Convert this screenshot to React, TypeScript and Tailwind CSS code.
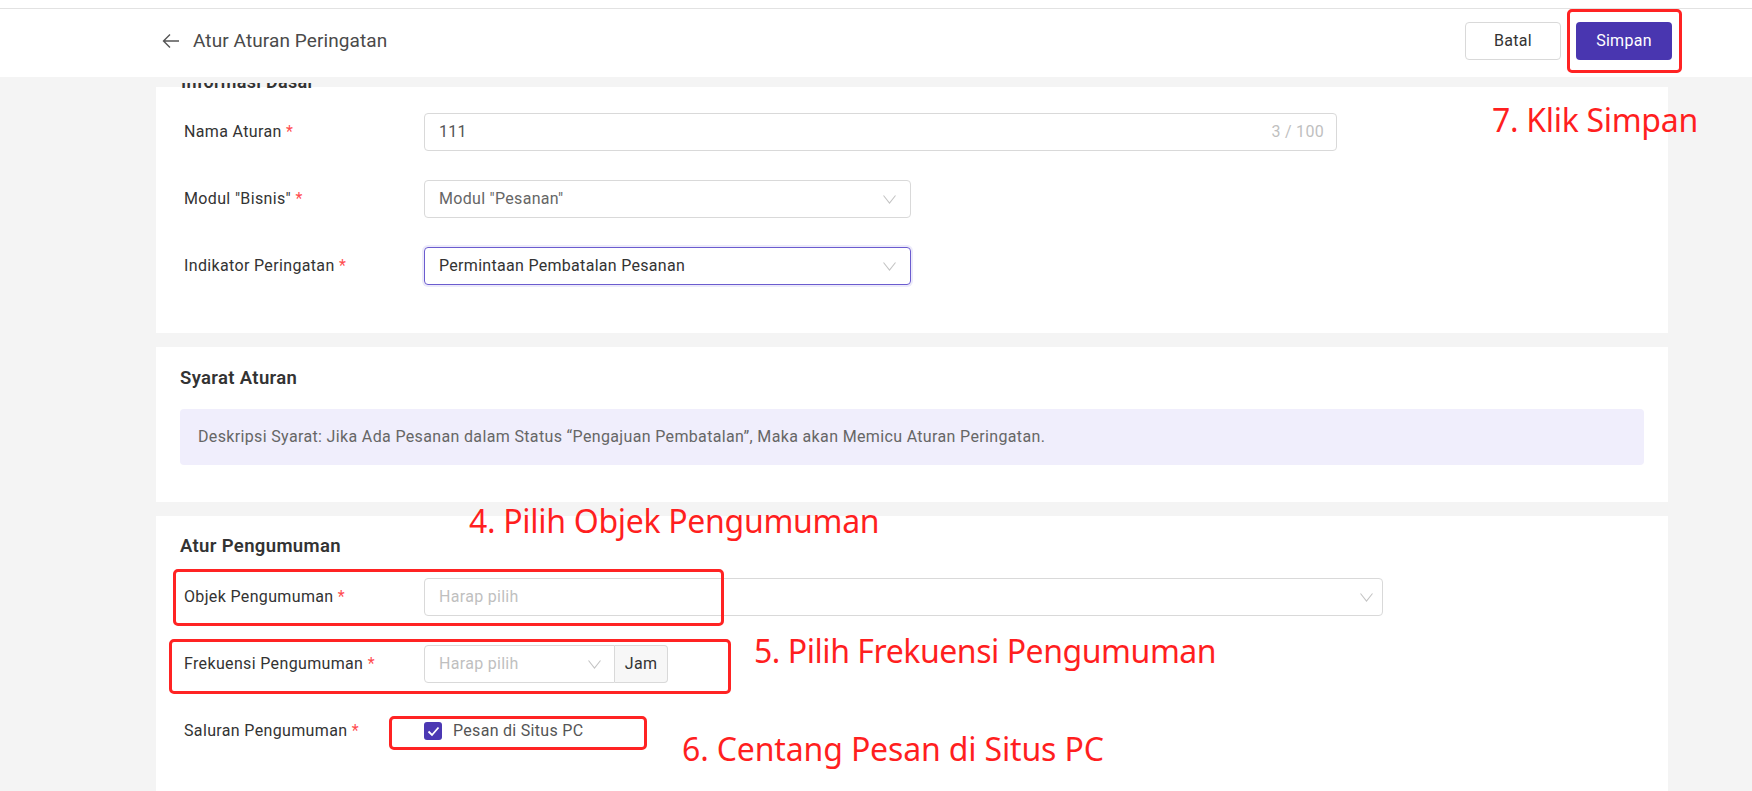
import React from "react";

function Chevron({ className = "" }: { className?: string }) {
  return (
    <svg width="13" height="9" viewBox="0 0 13 9" className={className} fill="none">
      <polyline points="0.5,0.5 6.5,8 12.5,0.5" stroke="#c4c4c4" strokeWidth="1.1" />
    </svg>
  );
}

function Label({ text }: { text: string }) {
  return (
    <div className="w-[240px] shrink-0 text-[16px] tracking-[0.35px] text-[#333]">
      {text} <span className="text-[#ff4d4f]">*</span>
    </div>
  );
}

function Annot({ text, className }: { text: string; className: string }) {
  return (
    <div
      className={
        "absolute whitespace-nowrap font-['Noto_Sans',sans-serif] text-[32px] tracking-[-0.3px] leading-none text-[#ff1f1f] " +
        className
      }
    >
      {text}
    </div>
  );
}

export default function App() {
  return (
    <div className="relative h-[791px] w-[1752px] overflow-hidden flex flex-col font-['Roboto',sans-serif] bg-[#f4f4f4]">
      {/* top strip */}
      <div className="h-[9px] shrink-0 bg-white border-b border-[#e2e2e2]" />
      {/* header */}
      <header className="h-[68px] shrink-0 bg-white flex items-start justify-between pl-[162px] pr-[80px] pt-[13px]">
        <div className="flex items-center h-[38px] gap-[13px]">
          <svg width="18" height="16" viewBox="0 0 18 16" fill="none">
            <path d="M17 8H1.5M8 1.5L1.5 8L8 14.5" stroke="#555" strokeWidth="1.4" />
          </svg>
          <span className="text-[19px] tracking-[0.1px] text-[#4a4a4a]">Atur Aturan Peringatan</span>
        </div>
        <div className="flex gap-[15px]">
          <button className="w-[96px] h-[38px] rounded-[4px] border border-[#d9d9d9] bg-white text-[16px] tracking-[0.3px] text-[#333]">
            Batal
          </button>
          <button className="w-[96px] h-[38px] rounded-[4px] bg-[#4936b0] text-[16px] tracking-[0.3px] text-white">
            Simpan
          </button>
        </div>
      </header>

      {/* main */}
      <main className="flex-1 flex flex-col overflow-hidden pl-[156px] pr-[84px] bg-[#f4f4f4]">
        {/* strip with peeking title */}
        <div className="h-[10px] shrink-0 relative">
          <div className="relative z-10 mt-[6px] h-[8px] overflow-hidden pl-[25px]">
            <div className="-mt-[11px] text-[18px] tracking-[0.3px] leading-[20px] font-semibold text-[#333]">
              Informasi Dasar
            </div>
          </div>
        </div>

        {/* card 1 */}
        <section className="bg-white pt-[26px] pb-[48px] pl-[28px] flex flex-col gap-[29px] shrink-0">
          <div className="flex items-center">
            <Label text="Nama Aturan" />
            <div className="w-[913px] h-[38px] rounded-[4px] border border-[#d9d9d9] flex items-center justify-between pl-[14px] pr-[12px] text-[16px] tracking-[0.3px]">
              <span className="text-[#555]">111</span>
              <span className="text-[#bfbfbf]">3 / 100</span>
            </div>
          </div>
          <div className="flex items-center">
            <Label text={'Modul "Bisnis"'} />
            <div className="w-[487px] h-[38px] rounded-[4px] border border-[#d9d9d9] flex items-center justify-between pl-[14px] pr-[14px] text-[16px] tracking-[0.3px]">
              <span className="text-[#666]">Modul "Pesanan"</span>
              <Chevron />
            </div>
          </div>
          <div className="flex items-center">
            <Label text="Indikator Peringatan" />
            <div className="w-[487px] h-[38px] rounded-[4px] border border-[#6b5ccf] shadow-[0_0_0_2px_rgba(100,85,210,0.12)] flex items-center justify-between pl-[14px] pr-[14px] text-[16px] tracking-[0.3px]">
              <span className="text-[#333]">Permintaan Pembatalan Pesanan</span>
              <Chevron />
            </div>
          </div>
        </section>

        {/* card 2 */}
        <section className="mt-[14px] bg-white pt-[19px] pb-[37px] px-[24px] shrink-0">
          <div className="h-[24px] leading-[24px] text-[18.5px] tracking-[0.35px] font-semibold text-[#333]">Syarat Aturan</div>
          <div className="mt-[19px] h-[56px] rounded-[4px] bg-[#f0eefc] flex items-center px-[18px] text-[16px] tracking-[0.35px] text-[#666]">
            Deskripsi Syarat: Jika Ada Pesanan dalam Status “Pengajuan Pembatalan”, Maka akan Memicu Aturan Peringatan.
          </div>
        </section>

        {/* card 3 */}
        <section className="mt-[14px] bg-white pt-[18px] px-[24px] flex-1">
          <div className="h-[24px] leading-[24px] text-[18.5px] tracking-[0.35px] font-semibold text-[#333]">Atur Pengumuman</div>
          <div className="mt-[20px] pl-[4px] flex flex-col gap-[29px]">
            <div className="flex items-center">
              <Label text="Objek Pengumuman" />
              <div className="w-[959px] h-[38px] rounded-[4px] border border-[#d9d9d9] flex items-center justify-between pl-[14px] pr-[9px] text-[16px] tracking-[0.3px]">
                <span className="text-[#bfbfbf]">Harap pilih</span>
                <Chevron />
              </div>
            </div>
            <div className="flex items-center">
              <Label text="Frekuensi Pengumuman" />
              <div className="flex h-[38px]">
                <div className="w-[191px] h-full rounded-l-[4px] border border-[#d9d9d9] flex items-center justify-between pl-[14px] pr-[13px] text-[16px] tracking-[0.3px]">
                  <span className="text-[#bfbfbf]">Harap pilih</span>
                  <Chevron />
                </div>
                <div className="w-[53px] h-full rounded-r-[4px] border border-l-0 border-[#d9d9d9] bg-[#f7f7f7] flex items-center justify-center text-[16px] tracking-[0.3px] text-[#333]">
                  Jam
                </div>
              </div>
            </div>
            <div className="flex items-center h-[38px]">
              <Label text="Saluran Pengumuman" />
              <div className="flex items-center gap-[11px]">
                <div className="w-[18px] h-[18px] rounded-[3px] bg-[#4b38b3] flex items-center justify-center">
                  <svg width="13" height="11" viewBox="0 0 13 11" fill="none">
                    <path d="M1.5 5.5L5 9L11.5 1.5" stroke="white" strokeWidth="1.8" />
                  </svg>
                </div>
                <span className="text-[16px] tracking-[0.3px] text-[#555]">Pesan di Situs PC</span>
              </div>
            </div>
          </div>
        </section>
      </main>

      {/* annotation boxes */}
      <div className="absolute left-[1567px] top-[9px] w-[115px] h-[64px] border-[3px] border-[#ff2323] rounded-[5px]" />
      <div className="absolute left-[173px] top-[569px] w-[551px] h-[57px] border-[3px] border-[#ff2323] rounded-[5px]" />
      <div className="absolute left-[169px] top-[639px] w-[562px] h-[55px] border-[3px] border-[#ff2323] rounded-[5px]" />
      <div className="absolute left-[389px] top-[716px] w-[258px] h-[34px] border-[3px] border-[#ff2323] rounded-[5px]" />

      {/* annotation texts */}
      <Annot text="7. Klik Simpan" className="left-[1492px] top-[104px]" />
      <Annot text="4. Pilih Objek Pengumuman" className="left-[469px] top-[505px]" />
      <Annot text="5. Pilih Frekuensi Pengumuman" className="left-[754px] top-[635px] tracking-[-0.45px]" />
      <Annot text="6. Centang Pesan di Situs PC" className="left-[682px] top-[733px] tracking-[-0.15px]" />
    </div>
  );
}
